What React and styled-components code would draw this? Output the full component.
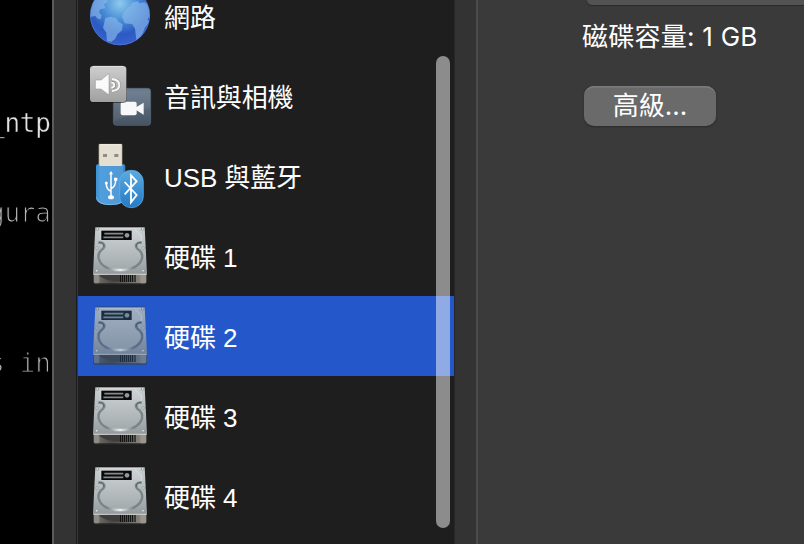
import React from "react";
import styled, { createGlobalStyle } from "styled-components";

const GlobalStyle = createGlobalStyle`
  body { margin: 0; background: #333; overflow: hidden; }
`;

const Screen = styled.div`
  display: flex;
  width: 804px;
  height: 544px;
  overflow: hidden;
  color: #fff;
`;

const Terminal = styled.div`
  box-sizing: border-box;
  flex: none;
  width: 52px;
  height: 544px;
  overflow: hidden;
  background: #000;
  padding-top: 108px;
`;

const TerminalLine = styled.div`
  font: 26px/30px "DejaVu Sans Mono", monospace;
  color: ${(p) => (p.$dim ? "#b4b4b4" : "#e2e2e2")};
  -webkit-text-stroke: ${(p) => (p.$dim ? "1.1px" : "0.4px")} #000;
  white-space: pre;
  will-change: transform;
  letter-spacing: -0.25px;
  margin-left: -11px;
  margin-bottom: ${(p) => p.$gap || 0}px;
`;

const Gutter = styled.div`
  box-sizing: border-box;
  flex: none;
  width: ${(p) => p.$width}px;
  background: #333;
  border-left: ${(p) => (p.$edge ? "2px solid #5b5b5b" : "1px solid #262626")};
`;

const Sidebar = styled.div`
  position: relative;
  box-sizing: border-box;
  flex: none;
  width: 378px;
  height: 544px;
  overflow: hidden;
  background: #1e1e1e;
  border-left: 1px solid #1a1a1a;
  box-shadow: inset 1px 0 #373737;
  padding-left: 1px;
`;

const DeviceList = styled.div`
  display: flex;
  flex-direction: column;
  margin-top: -24px;
`;

const DeviceRow = styled.div`
  display: flex;
  align-items: center;
  height: 80px;
  flex: none;
  background: ${(p) => (p.$selected ? "#2458ca" : "transparent")};
  font: 26px/36px "Liberation Sans", "Noto Sans CJK TC", sans-serif;
  letter-spacing: -0.1px;
  white-space: pre;
`;

const IconFrame = styled.svg`
  flex: none;
  width: 80px;
  height: 80px;
  margin: 0 4px 0 2px;
`;

const DeviceName = styled.span`
  padding-top: 4px;
`;

const ScrollThumb = styled.div`
  position: absolute;
  right: 4px;
  top: 56px;
  width: 14px;
  height: 472px;
  border-radius: 7px;
  background: rgba(255, 255, 255, 0.49);
`;

const Details = styled.div`
  box-sizing: border-box;
  flex: 1;
  min-width: 0;
  background: #3a3a3a;
  border-left: 2px solid #4c4c4c;
  font: 26px/36px Inter, "Noto Sans CJK TC", sans-serif;
`;

const SelectField = styled.div`
  height: 5px;
  margin-left: 109px;
  border-radius: 0 0 0 8px;
  background: #535353;
  box-shadow: 0 1px 1px #2b2b2b;
`;

const Capacity = styled.div`
  margin: 14px 0 0 104px;
  height: 36px;
  white-space: nowrap;
  letter-spacing: 0.25px;
`;

const Button = styled.button`
  display: block;
  width: 132px;
  height: 40px;
  margin: 31px 0 0 106px;
  padding: 0 0 1px;
  border: 0;
  border-radius: 10px;
  background: #6a6a6a;
  box-shadow: inset 0 1.5px #7c7c7c, 0 1px 2px #2a2a2a;
  color: #fff;
  font: inherit;
  line-height: 37px;
`;

function GlobeIcon() {
  return (
    <IconFrame viewBox="0 0 240 240">
      <defs>
        <radialGradient id="ocean" cx=".5" cy=".3" r=".72">
          <stop offset="0" stopColor="#8ecbed" />
          <stop offset=".4" stopColor="#4a8ed7" />
          <stop offset=".72" stopColor="#2b5bc2" />
          <stop offset="1" stopColor="#3b62cf" />
        </radialGradient>
        <clipPath id="globeClip"><circle cx="120" cy="118" r="89" /></clipPath>
      </defs>
      <circle cx="120" cy="118" r="90" fill="url(#ocean)" />
      <g clipPath="url(#globeClip)" fill="#8ab8ea" opacity=".65">
        <path d="M30 118V72l48-6 6 11-12 8 4 12-15 3-4 9 8 9-3 12-9-2-7-8-12 2-4 8z" />
        <path d="M75 127l16-5 17 4 8 12 12 7-2 18-13 11-8 15-11 8-13-1-2-25-10-16 4-15z" />
        <path d="M151 86l8-7 15-3 4 6 16-3 16 15v37l-8-14-10-6-5-12-16-2-9-5-9 3z" />
        <path d="M130 111l15-17 16-7 20 6 20 6 9 20-7 10 5 9-13 17-8 19-11 21-7-4-4-33-8-13-23-3-8-20z" />
      </g>
      <circle cx="120" cy="118" r="88.5" fill="none" stroke="#5f86df" strokeOpacity=".45" strokeWidth="3" />
    </IconFrame>
  );
}

function MediaIcon() {
  return (
    <IconFrame viewBox="0 0 240 240">
      <defs>
        <linearGradient id="speakerTile" x2="0" y2="1">
          <stop stopColor="#cecece" /><stop offset="1" stopColor="#a0a0a0" />
        </linearGradient>
        <linearGradient id="cameraTile" x2="0" y2="1">
          <stop stopColor="#6c7d8f" /><stop offset="1" stopColor="#465362" />
        </linearGradient>
      </defs>
      <rect x="100" y="97" width="112" height="111" rx="9" fill="url(#cameraTile)" stroke="#57697b" strokeWidth="2" />
      <path d="M102 105h109v50L102 195z" fill="#fff" opacity=".05" />
      <rect x="122" y="137" width="48" height="41" rx="6" fill="#f7f8fa" />
      <path d="M168 154l23-14v36l-23-14z" fill="#f7f8fa" />
      <rect x="30" y="32" width="110" height="109" rx="11" fill="#111" opacity=".55" />
      <rect x="30" y="30" width="109" height="108" rx="10" fill="url(#speakerTile)" />
      <path d="M39 31h91" stroke="#eee" strokeWidth="2" />
      <path d="M94 76q12 0 12 11t-12 11M96 67q24 0 24 20t-24 20" fill="none" stroke="#888" strokeWidth="4" />
      <path d="M46 72h17l24-20v65l-24-18H46z" fill="#fafafa" stroke="#888" strokeWidth="1.5" />
      <path d="M94 79q9 1 9 8t-9 9M96 69q22 1 22 18t-22 18" fill="none" stroke="#fafafa" strokeWidth="5.5" />
    </IconFrame>
  );
}

function UsbBluetoothIcon() {
  return (
    <IconFrame viewBox="0 0 240 240">
      <defs>
        <linearGradient id="usbBody">
          <stop stopColor="#3d91d1" /><stop offset=".15" stopColor="#509edc" />
          <stop offset=".9" stopColor="#5099d6" /><stop offset="1" stopColor="#2d77b5" />
        </linearGradient>
        <linearGradient id="bluetoothBody" x2="0" y2="1">
          <stop stopColor="#5baae2" /><stop offset="1" stopColor="#247ac5" />
        </linearGradient>
      </defs>
      <path d="M57 25h69v67H57z" fill="#e5dfd2" stroke="#b9b19f" strokeWidth="2" />
      <path d="M59 26h65" stroke="#faf5e9" strokeWidth="3" />
      <path d="M69 54h12v9H69zM103 54h12v9h-12z" fill="#8b8b88" />
      <path d="M48 91q0-6 6-6h4v5h68v-5h5q5 0 5 6v89q0 27-44 27T48 183z" fill="url(#usbBody)" />
      <path d="M49 184q3 22 43 22 22 0 35-8" fill="none" stroke="#90c7ef" strokeWidth="2" />
      <path d="M93 184v-74M93 166q-14-6-14-22M93 158q14-6 14-25" fill="none" stroke="#fff" strokeWidth="4.5" />
      <ellipse cx="93" cy="184" rx="9" ry="6" fill="#fff" />
      <circle cx="79" cy="141" r="4.5" fill="#fff" />
      <path d="M87 115l6-10 6 10zM102 125h10v9h-10z" fill="#fff" />
      <rect x="119" y="103" width="71" height="112" rx="34" fill="url(#bluetoothBody)" stroke="#68b3e5" strokeWidth="2" />
      <path d="M134 138l36 39-17 22v-81l17 18-36 39" fill="none" stroke="#fff" strokeWidth="5.5" />
    </IconFrame>
  );
}

function DiskIcon({ selected }) {
  const id = selected ? "selected" : "normal";
  return (
    <IconFrame viewBox="0 0 240 240">
      <defs>
        <linearGradient id={`diskLid-${id}`} x2="0" y2="1">
          <stop stopColor={selected ? "#9dacbf" : "#c6cccf"} />
          <stop offset=".55" stopColor={selected ? "#8b9bb0" : "#b4babd"} />
          <stop offset="1" stopColor={selected ? "#71849b" : "#929b9f"} />
        </linearGradient>
        <linearGradient id={`diskPlatter-${id}`} x2="0" y2="1">
          <stop stopColor={selected ? "#a0aebf" : "#ced3d5"} />
          <stop offset="1" stopColor={selected ? "#8495a9" : "#a2a9ac"} />
        </linearGradient>
        <linearGradient id={`diskRim-${id}`}>
          <stop stopColor={selected ? "#5a6e85" : "#7a858a"} />
          <stop offset=".2" stopColor={selected ? "#5c6f87" : "#798489"} />
          <stop offset=".5" stopColor={selected ? "#bdcad9" : "#edf0f1"} />
          <stop offset=".8" stopColor={selected ? "#5c6f87" : "#798489"} />
          <stop offset="1" stopColor={selected ? "#5a6e85" : "#7a858a"} />
        </linearGradient>
        <linearGradient id={`diskBase-${id}`}>
          <stop stopColor={selected ? "#4d5b73" : "#777570"} />
          <stop offset=".35" stopColor={selected ? "#3f4a5c" : "#4c4a47"} />
          <stop offset="1" stopColor={selected ? "#717b8c" : "#94918b"} />
        </linearGradient>
      </defs>
      <path d="M39 173h162v25q0 8-7 8H47q-8 0-8-8z" fill={selected ? "#304768" : "#272727"} />
      <path d="M41 174h158v23q0 5-6 5H47q-6 0-6-5z" fill={`url(#diskBase-${id})`} />
      <path d="M58 177h62v20q-33 2-62-17z" fill={selected ? "#3b485c" : "#3f3d3b"} />
      <rect x="42" y="177" width="16" height="25" rx="4" fill={selected ? "#60708a" : "#8e8982"} />
      <rect x="181" y="177" width="17" height="25" rx="4" fill={selected ? "#6b7c94" : "#9b958b"} />
      <path d="M46 33h148l7 141H39z" fill={`url(#diskLid-${id})`} />
      <path d="M45 33h150" stroke={selected ? "#24394f" : "#111"} strokeWidth="2" />
      <path d="M47 37h146" stroke={selected ? "#bac5d1" : "#e2e6e7"} strokeWidth="2" />
      <path
        d="M57 77V48Q58 40 67 40h100l17 18v19c-16 0-21 14-10 21 11 7 16 17 14 27-4 25-31 38-68 38s-63-13-66-38c-1-11 3-20 14-27 12-8 5-21-11-21z"
        fill={`url(#diskPlatter-${id})`}
      />
      <path d="M167 40l17 18v17" fill="none" stroke={selected ? "#c1cbd7" : "#e3e7e8"} strokeWidth="2" />
      <path
        d="M55 80c17-2 23 10 13 19-10 7-14 17-12 28 5 23 30 35 64 35s61-12 66-35c2-11-2-21-13-28-10-9-4-21 12-19"
        fill="none" stroke={`url(#diskRim-${id})`} strokeWidth="7.5"
      />
      <path d="M57 79q16 0 14 14M184 79q-17 0-14 14" fill="none" stroke={selected ? "#405570" : "#586367"} strokeWidth="2.5" />
      <rect x="64" y="44" width="91" height="28" fill={selected ? "#1a2c40" : "#080808"} />
      <path d="M73 53h57M70 64h60" stroke={selected ? "#728397" : "#85898b"} strokeWidth="5.5" />
      <circle cx="141" cy="58" r="7" fill={selected ? "#77889b" : "#92969a"} />
      {[[52, 39], [188, 39], [51, 96], [189, 96], [50, 164], [189, 164]].map(([x, y]) => (
        <circle key={`${x}-${y}`} cx={x} cy={y} r="4" fill={selected ? "#b3c1cf" : "#e6e7e2"} stroke={selected ? "#687b90" : "#84898a"} strokeWidth="2" />
      ))}
      <path d="M40 175h160" stroke={selected ? "#a7b3c0" : "#dad9d4"} strokeWidth="3" />
      <path d="M122 177v21M128 177v21M134 177v21M140 177v21M146 177v21M152 177v21M158 177v21M165 177v21" stroke={selected ? "#192a3e" : "#0b0b0b"} strokeWidth="3.5" />
    </IconFrame>
  );
}

const devices = [
  { name: "網路", Icon: GlobeIcon },
  { name: "音訊與相機", Icon: MediaIcon },
  { name: "USB 與藍牙", Icon: UsbBluetoothIcon },
  { name: "硬碟 1", Icon: DiskIcon },
  { name: "硬碟 2", Icon: DiskIcon, selected: true },
  { name: "硬碟 3", Icon: DiskIcon },
  { name: "硬碟 4", Icon: DiskIcon },
];

export default function App() {
  return (
    <Screen>
      <GlobalStyle />
      <Terminal>
        <TerminalLine $gap={60}>_ntpd</TerminalLine>
        <TerminalLine $dim $gap={120}>gura</TerminalLine>
        <TerminalLine $dim>s in</TerminalLine>
      </Terminal>
      <Gutter $width={24} $edge />
      <Sidebar>
        <DeviceList>
          {devices.map(({ name, Icon, selected }) => (
            <DeviceRow key={name} $selected={selected}>
              <Icon selected={selected} />
              <DeviceName>{name}</DeviceName>
            </DeviceRow>
          ))}
        </DeviceList>
        <ScrollThumb />
      </Sidebar>
      <Gutter $width={22} />
      <Details>
        <SelectField />
        <Capacity>磁碟容量: 1 GB</Capacity>
        <Button>高級...</Button>
      </Details>
    </Screen>
  );
}
